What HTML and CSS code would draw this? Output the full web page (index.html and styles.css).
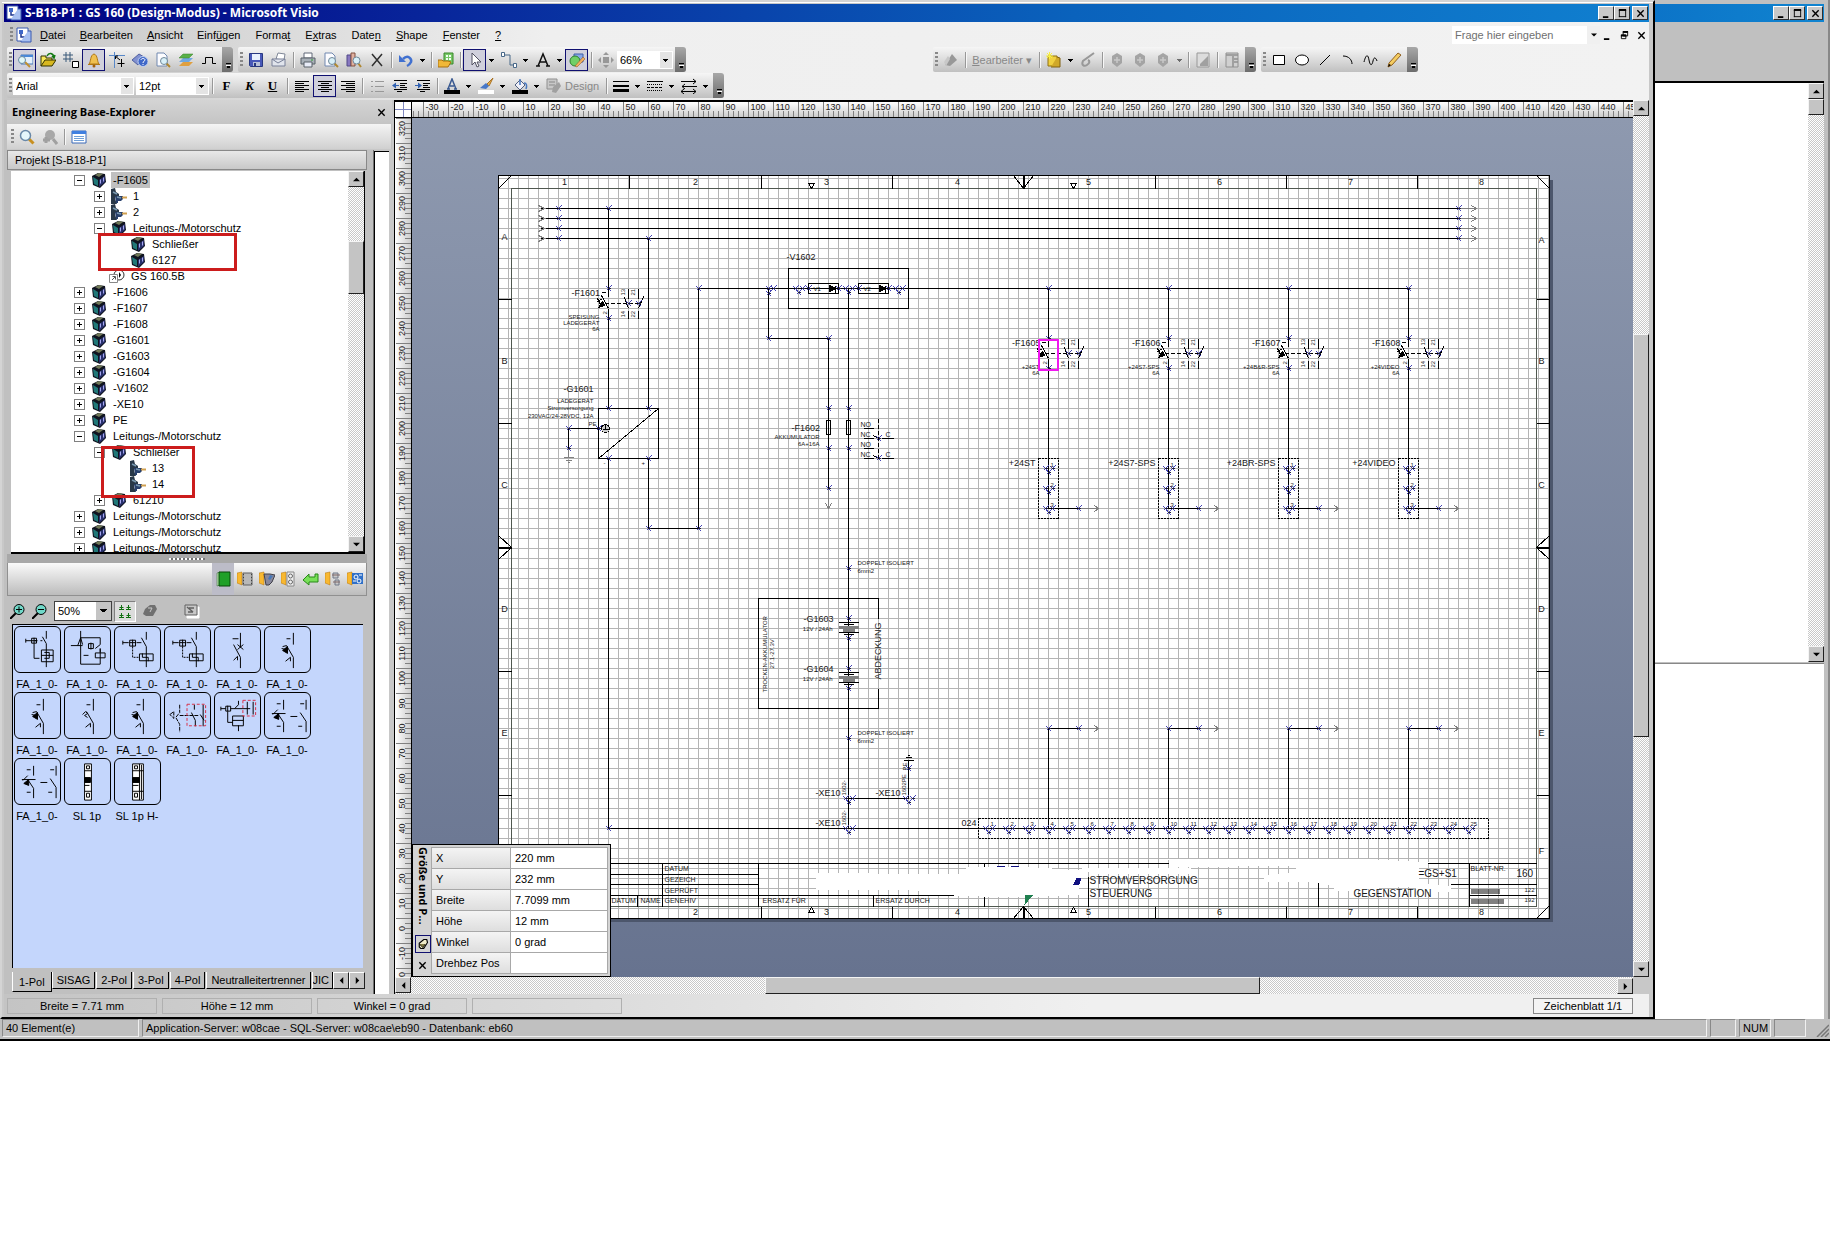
FILE: index.html
```html
<!DOCTYPE html>
<html lang="de">
<head>
<meta charset="utf-8">
<meta name="viewport" content="width=device-width, initial-scale=1">
<title>S-B18-P1 : GS 160 (Design-Modus) - Microsoft Visio</title>
<link rel="stylesheet" href="styles.css">
</head>
<body>
<svg class="sprite" aria-hidden="true">
  <symbol id="i-lens" viewBox="0 0 16 16"><path d="M9.500 9.500l5 5" stroke="#c89020" stroke-width="3"/><circle cx="6.500" cy="6.500" r="5" fill="#e4f6fc" stroke="#6888a8" stroke-width="1.500"/></symbol>
  <symbol id="i-lensgray" viewBox="0 0 16 16"><circle cx="8" cy="6" r="5" fill="#a8a8a8"/><path d="M11 10l4 5M1 11h7M4 8v6" stroke="#a0a0a0" stroke-width="3"/></symbol>
  <symbol id="i-window" viewBox="0 0 16 16"><path d="M1 2h14v12H1z" fill="#fff" stroke="#3868b8"/><path d="M1 2h14v3H1z" fill="#4080e0"/><path d="M3 7.500h10M3 9.500h10M3 11.500h10" stroke="#70a0d8"/></symbol>
  <symbol id="i-winlens" viewBox="0 0 16 16"><path d="M4 3h12v9H4z" fill="#e4f0fc" stroke="#4878b8"/><path d="M4 3h12v2H4z" fill="#4888d8"/><path d="M8 10l5 5" stroke="#c09030" stroke-width="2"/><circle cx="5" cy="8" r="3.500" fill="#e0f8f8" stroke="#6888a0"/></symbol>
  <symbol id="i-open" viewBox="0 0 16 16"><path d="M1 14V4h5v2h6v3" fill="#f8e858" stroke="#303000"/><path d="M1 14l4-6h11l-4 6z" fill="#d8b820" stroke="#303000"/><path d="M7 4c2-4 6-3 7 1M12 4l2 2 1-3" fill="none" stroke="#107810" stroke-width="1.500"/></symbol>
  <symbol id="i-grid" viewBox="0 0 16 16"><path d="M3 0v10M7 0v10M0 3h10M0 7h10" stroke="#385878"/><path d="M9.500 9.500h6v6h-6z" fill="#fff" stroke="#000"/></symbol>
  <symbol id="i-bell" viewBox="0 0 16 16"><path d="M3 12c2-2 1-9 5-10 4 1 3 8 5 10z" fill="#f0c050" stroke="#b07818"/><path d="M2 12.500h12" stroke="#b07818"/><circle cx="8" cy="14" r="1.500" fill="#a06010"/></symbol>
  <symbol id="i-guides" viewBox="0 0 16 16"><path d="M5.500 0v16M0 3.500h16" stroke="#5888c8"/><path d="M6 4l5 4M12.500 7v8M8.500 11.500h7M7 4h2M6.500 5v2" stroke="#000"/></symbol>
  <symbol id="i-help" viewBox="0 0 16 16"><path d="M0 8l7-6 5 3-6 8z" fill="#8090d0" stroke="#5060a0"/><circle cx="11" cy="9.500" r="5" fill="#4068c8" stroke="#c0d0f0"/><path d="M9 8c0-2 4-2 4 0 0 1-2 1-2 3m0 1v1" fill="none" stroke="#fff"/></symbol>
  <symbol id="i-pagelens" viewBox="0 0 16 16"><path d="M2 1h7l3 3v10H2z" fill="#fcfcff" stroke="#7088b0"/><path d="M11 11l4 4" stroke="#b08830" stroke-width="2"/><circle cx="9" cy="9" r="3.500" fill="#d8f0f8" stroke="#708898"/></symbol>
  <symbol id="i-layers" viewBox="0 0 16 16"><path d="M1 14l4-4h10l-4 4z" fill="#e0a040"/><path d="M1 10l4-4h10l-4 4z" fill="#70a8e0"/><path d="M1 6l4-4h10l-4 4z" fill="#58b048" stroke="#388028" stroke-width=".5"/></symbol>
  <symbol id="i-pulse" viewBox="0 0 16 16"><path d="M1 11.500h3.500v-6h7v6H15" fill="none" stroke="#000"/></symbol>
  <symbol id="i-save" viewBox="0 0 16 16"><path d="M1.500 1.500h13v13h-12l-1-1z" fill="#4858b8" stroke="#283880"/><path d="M4 2h8v6H4z" fill="#e8f0fc"/><path d="M5 10h7v4H5z" fill="#b8c0d8"/><path d="M6 11h2v3H6z" fill="#283880"/></symbol>
  <symbol id="i-mail" viewBox="0 0 16 16"><path d="M5 7l2-6 7 1-1 6z" fill="#fff" stroke="#808898"/><path d="M1 7h13v7H1z" fill="#e0e4ec" stroke="#788098"/><path d="M1 7l6 4 7-4" fill="none" stroke="#788098"/></symbol>
  <symbol id="i-print" viewBox="0 0 16 16"><path d="M4 1h8v5H4z" fill="#fff" stroke="#606878"/><path d="M1 6h14v6H1z" fill="#a8b0b8" stroke="#586068"/><path d="M4 10h8v5H4z" fill="#e8ecf8" stroke="#586068"/><path d="M11 8h2" stroke="#30a030"/></symbol>
  <symbol id="i-find" viewBox="0 0 16 16"><path d="M1 3h4v11H1z" fill="#8878c0" stroke="#504888"/><path d="M5 1h4v13H5z" fill="#e0b0a0" stroke="#805040"/><path d="M12 11l3 4" stroke="#b08830" stroke-width="2"/><circle cx="10.500" cy="8.500" r="3.500" fill="#d8f0f8" stroke="#708898"/></symbol>
  <symbol id="i-x" viewBox="0 0 16 16"><path d="M3 2l10 12M13 2L3 14" stroke="#303030" stroke-width="1.500"/></symbol>
  <symbol id="i-undo" viewBox="0 0 16 16"><path d="M5 7c5-5 9 0 8 3-1 2-2 3-4 4" fill="none" stroke="#4070d0" stroke-width="2.500"/><path d="M1 3v7h7z" fill="#4070d0"/></symbol>
  <symbol id="i-stencil" viewBox="0 0 16 16"><path d="M6 1h9v11H6z" fill="#78c868" stroke="#388828"/><path d="M8 3h2v2H8zM11 3h2v2h-2zM8 6h2v2H8zM11 6h2v2h-2z" fill="#f0fff0"/><path d="M0 15V8h4l1 1h5l3 1-3 5z" fill="#f0b838" stroke="#a87010"/></symbol>
  <symbol id="i-pointer" viewBox="0 0 16 16"><path d="M5 1v12l3-3 2 5 2-1-2-4h4z" fill="#fff" stroke="#505060"/></symbol>
  <symbol id="i-connector" viewBox="0 0 16 16"><path d="M4 3h5v10h3" fill="none" stroke="#486888"/><path d="M.5.500h3v4h-3zM12.500 11.500h3v4h-3z" fill="#fff" stroke="#486888"/></symbol>
  <symbol id="i-a" viewBox="0 0 16 16"><path d="M3 14L8 2l5 12M5 10h6M1 14h4M11 14h4" fill="none" stroke="#101010" stroke-width="1.500"/></symbol>
  <symbol id="i-shapes" viewBox="0 0 16 16"><path d="M5 2h9v8H5z" fill="#88a8e8" stroke="#4060a8"/><circle cx="6" cy="9" r="5" fill="#70d068" stroke="#308030"/><path d="M6 14l8-9 2 2-8 8z" fill="#f0b060" stroke="#885020" stroke-width=".5"/></symbol>
  <symbol id="i-nudge" viewBox="0 0 16 16"><path d="M5 5h6v6H5zM8 0l3 3H5zM8 16l3-3H5zM0 8l3-3v6zM16 8l-3-3v6z" fill="#989898"/></symbol>
  <symbol id="i-left" viewBox="0 0 16 16"><path d="M1 3.500h14M1 5.500h9M1 7.500h14M1 9.500h9M1 11.500h14M1 13.500h9" stroke="#000"/></symbol>
  <symbol id="i-center" viewBox="0 0 16 16"><path d="M1 3.500h14M4 5.500h8M1 7.500h14M4 9.500h8M1 11.500h14M4 13.500h8" stroke="#000"/></symbol>
  <symbol id="i-right" viewBox="0 0 16 16"><path d="M1 3.500h14M6 5.500h9M1 7.500h14M6 9.500h9M1 11.500h14M6 13.500h9" stroke="#000"/></symbol>
  <symbol id="i-list" viewBox="0 0 16 16"><path d="M6 3.500h9M6 8.500h9M6 13.500h9M2 3.500h2M2 8.500h2M2 13.500h2" stroke="#989898"/></symbol>
  <symbol id="i-outdent" viewBox="0 0 16 16"><path d="M2 2.500h13M8 5.500h7M8 7.500h5M8 9.500h7M2 11.500h13M5 13.500h5" stroke="#000"/><path d="M0 7.500l4-3v6zM4 7h3v1H4z" fill="#3060b0"/></symbol>
  <symbol id="i-indent" viewBox="0 0 16 16"><path d="M2 2.500h13M8 5.500h7M8 7.500h5M8 9.500h7M2 11.500h13M5 13.500h5" stroke="#000"/><path d="M7 7.500l-4-3v6zM0 7h3v1H0z" fill="#3060b0"/></symbol>
  <symbol id="i-fontcolor" viewBox="0 0 16 16"><path d="M4 11L8 1l4 10M6 8h4M3 11h3M10 11h3" fill="none" stroke="#385890" stroke-width="1.500"/><path d="M0 12h16v4H0z"/></symbol>
  <symbol id="i-brush" viewBox="0 0 16 16"><path d="M15 0l-6 6 2 2z" fill="#e8b050" stroke="#a87020"/><path d="M2 10l6-5 3 3-3 3z" fill="#4878c8"/><path d="M0 12h16v4H0z" fill="#fff"/></symbol>
  <symbol id="i-bucket" viewBox="0 0 16 16"><path d="M3 7l5-5 5 5-5 5z" fill="#f0f0f8" stroke="#506080"/><path d="M8 7V1M12 5c3 0 3 3 2 6" fill="none" stroke="#4878c0" stroke-width="1.500"/><path d="M0 12h16v4H0z"/></symbol>
  <symbol id="i-design" viewBox="0 0 16 16"><path d="M1 1h10v10H1z" fill="#c8c8c8" stroke="#909090"/><path d="M3 4h6M3 7h6" stroke="#888"/><path d="M7 9l6-5 2 4-5 7-4-1z" fill="#a0a0a0"/></symbol>
  <symbol id="i-weight" viewBox="0 0 16 16"><path d="M0 3.500h16" stroke="#000"/><path d="M0 8h16" stroke="#000" stroke-width="2"/><path d="M0 12.500h16" stroke="#000" stroke-width="3"/></symbol>
  <symbol id="i-dash" viewBox="0 0 16 16"><path d="M0 3.500h16" stroke="#000"/><path d="M0 6.500h16M0 12.500h16" stroke="#000" stroke-dasharray="1 1"/><path d="M0 9.500h16" stroke="#000" stroke-dasharray="3 1"/></symbol>
  <symbol id="i-arrows" viewBox="0 0 16 16"><path d="M0 3.500h15M1 8.500h15M0 13.500h15M12 1l3 2.500L12 6M4 6L1 8.500 4 11M12 11l3 2.500-3 2.500M3 11l-3 2.500L3 16" fill="none" stroke="#000"/></symbol>
  <symbol id="i-gpen" viewBox="0 0 16 16"><path d="M2 13L9 2l5 6-7 6z" fill="#989898"/><path d="M1 10l4-6 2 3-4 7z" fill="#c8c8c8"/></symbol>
  <symbol id="i-gcube" viewBox="0 0 16 16"><path d="M8 1l5 3v7l-5 4-5-4V4z" fill="#a4a4a4"/><path d="M5 8h6M8 5v6" stroke="#c8c8c8" stroke-width="1.500"/></symbol>
  <symbol id="i-glink" viewBox="0 0 16 16"><path d="M14 1L3 9c-2 4 1 6 4 4s3-4 1-5" fill="none" stroke="#989898" stroke-width="2"/></symbol>
  <symbol id="i-gdoc" viewBox="0 0 16 16"><path d="M2 1h12v14H2z" fill="#dcdcdc" stroke="#989898"/><path d="M5 12l8-8v10H5z" fill="#a0a0a0"/></symbol>
  <symbol id="i-gtable" viewBox="0 0 16 16"><path d="M2 1h12v14H2z" fill="#d0d0d0" stroke="#909090"/><path d="M2 3h12M9 4v11M10 7h4M10 10h4" stroke="#909090" stroke-width="1.500"/></symbol>
  <symbol id="i-new" viewBox="0 0 16 16"><path d="M2 4h9v10H2z" fill="#f0d040" stroke="#907010"/><path d="M11 5l3 1v9H5" fill="#d0a828" stroke="#806010"/><path d="M0 4h7M3.500 0v7M1 1l5 5M6 1L1 6" stroke="#f8f040"/></symbol>
  <symbol id="i-rect" viewBox="0 0 16 16"><path d="M2.500 3.500h11v9h-11z" fill="#fff" stroke="#000"/></symbol>
  <symbol id="i-oval" viewBox="0 0 16 16"><ellipse cx="8" cy="8" rx="6.500" ry="5" fill="#fff" stroke="#000"/></symbol>
  <symbol id="i-line" viewBox="0 0 16 16"><path d="M3 13L13 3" stroke="#000"/></symbol>
  <symbol id="i-arc" viewBox="0 0 16 16"><path d="M3 4c6 0 9 4 9 8" fill="none" stroke="#000"/></symbol>
  <symbol id="i-curve" viewBox="0 0 16 16"><path d="M1 10c2-8 4-8 5-2s3 6 4 1 3-3 4 0" fill="none" stroke="#000"/></symbol>
  <symbol id="i-pencil" viewBox="0 0 16 16"><path d="M2 15l1-4L12 1l3 2-9 10z" fill="#f4cc60" stroke="#906020"/><path d="M2 15l1-3 2 1z"/></symbol>
  <symbol id="i-app" viewBox="0 0 16 16"><path d="M1 1h11v13H1z" fill="#fff" stroke="#3858b0"/><path d="M3 3h4v4H3zM9 8h3v3H9z" fill="#4068c8"/><path d="M5 7v3h4" fill="none" stroke="#203890" stroke-width="1.500"/><path d="M12 4h3v11H5v-1" fill="#a8c0f0" stroke="#3858b0"/></symbol>
  <symbol id="i-cube" viewBox="0 0 16 16"><path d="M1 4l6-3 7 1 1 8-6 6-7-3z" fill="#101420"/><path d="M2 5l5 3v6l-4-2z" fill="#207878"/><path d="M8 8l6-4v6l-6 5z" fill="#28306c"/><path d="M9 8l1-1v4l-1 1zM12 6l1-1v4l-1 1z" fill="#a8a8f0"/><path d="M4 3l4-2 4 1-4 3z" fill="#707858"/></symbol>
  <symbol id="i-pin" viewBox="0 0 16 16"><path d="M0 1l4-1 1 4 3 2v3H4v2l2 5H0z" fill="#283848"/><path d="M4 8h8v3l-2 2H7v2H5z" fill="#28406c"/><path d="M2 4l4 2M6 9l4 1" stroke="#7898b0" stroke-width="1.500"/><path d="M11 9.500h5" stroke="#d0a050" stroke-width="2"/></symbol>
  <symbol id="i-ref" viewBox="0 0 16 16"><circle cx="10" cy="7" r="5" fill="#fff" stroke="#303030"/><path d="M10 4l2 3-2 3z"/><path d="M.5 6.500h8v8h-8z" fill="#fff" stroke="#888"/><path d="M3 12l3-3M3.500 8.500h3v3" fill="none" stroke="#555"/></symbol>
  <symbol id="i-book" viewBox="0 0 16 16"><path d="M2 2l3-1v13l-3 1z" fill="#b8e8b0" stroke="#305830" stroke-width=".5"/><path d="M4 1h11v14H4z" fill="#20a028" stroke="#084808"/></symbol>
  <symbol id="i-folder" viewBox="0 0 16 16"><path d="M0 2l5-1v13l-5-2z" fill="#f8b830" stroke="#b07010" stroke-width=".5"/></symbol>
  <symbol id="i-f1" viewBox="0 0 16 16"><use href="#i-folder"/><path d="M6 2h9v12H6z" fill="#b8b8b8" stroke="#606060"/><path d="M6.500 3v11M14.500 3v11" stroke="#404040" stroke-dasharray="1 2"/></symbol>
  <symbol id="i-f2" viewBox="0 0 16 16"><use href="#i-folder"/><path d="M5 3h6l5 1-3 7-3 3H7z" fill="#88889c" stroke="#404048"/><path d="M11 4l3 1-3 4-2-1z" fill="#4878b8"/></symbol>
  <symbol id="i-f3" viewBox="0 0 16 16"><use href="#i-folder"/><path d="M6 1h7v14H6z" fill="#f0f0f0" stroke="#888"/><circle cx="9.500" cy="5" r="2" fill="none" stroke="#666"/><circle cx="9.500" cy="11" r="2" fill="none" stroke="#666"/></symbol>
  <symbol id="i-f4" viewBox="0 0 16 16"><use href="#i-folder"/><path d="M8 2h5v5H8zM10 9h4v5h-4z" fill="#c8c8c8" stroke="#707888"/><path d="M7 4h8M8 11h7" stroke="#806868"/></symbol>
  <symbol id="i-f5" viewBox="0 0 16 16"><use href="#i-folder"/><path d="M5 2h11v11H5z" fill="#3070c8"/><circle cx="9" cy="6" r="2" fill="none" stroke="#fff"/><circle cx="12" cy="10" r="2" fill="none" stroke="#fff"/><path d="M12 4h3M6 10h3" stroke="#fff"/></symbol>
  <symbol id="i-back" viewBox="0 0 16 16"><path d="M0 9l6-6v3h6V3h3v8H6v3z" fill="#78e058" stroke="#288818"/></symbol>
  <symbol id="i-zoomin" viewBox="0 0 16 16"><path d="M6 10l-6 6" stroke="#000" stroke-width="2"/><circle cx="9" cy="6.500" r="5" fill="#70d8c8" stroke="#000"/><path d="M6 6.500h6M9 3.500v6" stroke="#000"/></symbol>
  <symbol id="i-zoomout" viewBox="0 0 16 16"><path d="M6 10l-6 6" stroke="#000" stroke-width="2"/><circle cx="9" cy="6.500" r="5" fill="#70d8c8" stroke="#000"/><path d="M6 6.500h6" stroke="#000"/></symbol>
  <symbol id="i-tiles" viewBox="0 0 16 16"><path d="M2 6.500h5M9 6.500h5M2 14.500h5M9 14.500h5M4.500 2v4M11.500 2v4M4.500 10v4M11.500 10v4M2.500 4.500h4M9.500 4.500h4M2.500 12.500h4M9.500 12.500h4" stroke="#107010"/></symbol>
  <symbol id="i-tack" viewBox="0 0 16 16"><path d="M3 6l5-4h5l2 4-4 7H4l-3-2z" fill="#707070"/><path d="M6 5h4l-2 4" fill="none" stroke="#c8c8c8"/></symbol>
  <symbol id="i-tack2" viewBox="0 0 16 16"><path d="M3 7l6-5h4l1 4-5 8H5l-2-2z" fill="#f0ecc8" stroke="#000" stroke-width="1.500"/><path d="M3 8l5 5 3-5" fill="#807840" stroke="#000"/></symbol>
  <symbol id="i-pages" viewBox="0 0 16 16"><path d="M3 4h12v11H3z" fill="#fff" stroke="#fff"/><path d="M1 2h12v10H1z" fill="#c8c8c8" stroke="#606060"/><path d="M3 4l6 5M5 5h5M4 9h5" stroke="#606060" stroke-width="1.500"/></symbol>
  <symbol id="a-up" viewBox="0 0 8 8"><path d="M4 2l4 4H0z"/></symbol>
  <symbol id="a-down" viewBox="0 0 8 8"><path d="M4 6l4-4H0z"/></symbol>
  <symbol id="a-left" viewBox="0 0 8 8"><path d="M2 4l4-4v8z"/></symbol>
  <symbol id="a-right" viewBox="0 0 8 8"><path d="M6 4L2 0v8z"/></symbol>
  <symbol id="w-min" viewBox="0 0 10 10"><path d="M1 8h6v2H1z"/></symbol>
  <symbol id="w-max" viewBox="0 0 10 10"><path d="M1 1.500h8M1.500 1v8M8.500 1v8M1 8.500h8" stroke="#000"/><path d="M1 0h8v2H1z"/></symbol>
  <symbol id="w-res" viewBox="0 0 10 10"><path d="M3.500 1.500h5v4h-5zM1.500 4.500h5v4h-5z" fill="none" stroke="#000"/><path d="M3 0h6v2H3zM1 4h6v2H1z"/></symbol>
  <symbol id="w-x" viewBox="0 0 10 10"><path d="M1.500 1.500l7 7M8.500 1.500l-7 7" stroke="#000" stroke-width="1.500"/></symbol>
  <symbol id="s-coil" viewBox="0 0 46 46"><path d="M11 14h6m3 0h3m3 0h2M11 12v4M17 11.500h5v5h-5zM17 14h5M19.500 11v6M28 10l4 7v24M32 4v8M27 23.500h12v12H27zM19.500 17v15H25M27 29h12M30 26h5v6h-5"/></symbol>
  <symbol id="s-loop" viewBox="0 0 46 46"><path d="M16 4v34M16 11h20v7l-5 4M36 22v16H16M13 19l3-8 2 7M6 19h12M24 17h5v5h-5zM26.500 16v7M31 26.500h10v5H31zM36 22v4M19 29h5"/></symbol>
  <symbol id="s-coil2" viewBox="0 0 46 46"><path d="M8 16h6M8 14v4M15 13.500h6v6h-6zM15 16h6M18 13v7M22 16h5M27 11l5 9v21M32 5v8M25 27.500h14v7H25z"/><path d="M18 20v11h7" stroke-dasharray="2 1"/><path d="M28 27v4h6v4"/></symbol>
  <symbol id="s-sw" viewBox="0 0 46 46"><path d="M26 6v15M23 18l6 5M29 18l-6 5M19 18l7 13v11M18 12h6M19 34l4-4v4"/></symbol>
  <symbol id="s-br" viewBox="0 0 46 46"><path d="M29 6v12M22 19l7 12v11M22 12h4M21 35l5-4v4M18 20l4-1M17 22l5 1"/><path d="M18 24l5-4v7z" fill="currentColor"/></symbol>
  <symbol id="s-br2" viewBox="0 0 46 46"><path d="M29 6v12M22 19l7 12v11M22 12h4M21 35l5-4v4M18 22l3-3 2 2-3 2 3 2"/></symbol>
  <symbol id="s-red" viewBox="0 0 46 46"><path d="M15 12v8l-4 5 4 7v8M5 22l4-3v7zM15 23h20" stroke-dasharray="4 1"/><path d="M30 12v5M27 20l4 8v6M39 12v22M36 22l4 6"/><path d="M22.500 11.500h19v22h-19z" stroke="#d83048" stroke-dasharray="3 2"/></symbol>
  <symbol id="s-red2" viewBox="0 0 46 46"><path d="M6 16h5M6 14v4M11 13.500h5v5h-5zM13 13v6M13 19v11h5M18 23.500h11v10H18zM18 28h11M24 8v4l-4 4M24 33v6M16 16h20"/><path d="M28.500 7.500h13v16h-13z" stroke="#d83048" stroke-dasharray="3 2"/><path d="M33 9v13M39 9v13"/></symbol>
  <symbol id="s-two" viewBox="0 0 46 46"><path d="M19 7v10M13 21l6 9v10M7 21h14M26 24h7M42 7v10M36 20l6 9v11M12 11h4M36 11h4M12 34h4M34 34h4M8 22l5-5"/><path d="M9 25l5-4v6z" fill="currentColor"/></symbol>
  <symbol id="s-sl" viewBox="0 0 46 46"><path d="M20 5h7v37h-7z" fill="#fff"/><path d="M20 12h7M20 33h7M22 7h3v3h-3zM22 35h3v4h-3zM20 27h5"/><path d="M20 19h6v5h-6z" fill="currentColor"/></symbol>
  <symbol id="s-slh" viewBox="0 0 46 46"><path d="M18 5h11v37H18zM25 5v37" fill="#fff"/><path d="M18 12h11M18 33h11M20 7h3v3h-3zM20 35h3v4h-3zM27 6v35M18 27h6"/><path d="M18 19h7v5h-7z" fill="currentColor"/></symbol>
</svg>

<div class="host">
 <div class="windows">
 <main class="visio">
  <header class="titlebar"><svg class="ico"><use href="#i-app"/></svg><h1>S-B18-P1 : GS 160 (Design-Modus) - Microsoft Visio</h1>
   <div class="winbtns"><button aria-label="Minimieren"><svg><use href="#w-min"/></svg></button><button aria-label="Maximieren"><svg><use href="#w-max"/></svg></button><button class="close" aria-label="Schließen"><svg><use href="#w-x"/></svg></button></div>
  </header>
  <div class="chrome">
   <nav class="menubar"><span class="grip"></span><svg class="ico"><use href="#i-app"/></svg>
    <button><u>D</u>atei</button><button><u>B</u>earbeiten</button><button><u>A</u>nsicht</button><button>Einf<u>ü</u>gen</button><button>Forma<u>t</u></button><button>E<u>x</u>tras</button><button>Date<u>n</u></button><button><u>S</u>hape</button><button><u>F</u>enster</button><button><u>?</u></button>
    <div class="ask"><input aria-label="Frage" placeholder="Frage hier eingeben"><button aria-label="Liste"><svg><use href="#a-down"/></svg></button></div>
    <div class="docbtns"><button aria-label="Dokument minimieren"><svg><use href="#w-min"/></svg></button><button aria-label="Wiederherstellen"><svg><use href="#w-res"/></svg></button><button aria-label="Dokument schließen"><svg><use href="#w-x"/></svg></button></div>
   </nav>
   <div class="bars">
    <div class="band"><span class="grip"></span>
     <button class="on" aria-label="Explorer"><svg><use href="#i-winlens"/></svg></button><button aria-label="Öffnen"><svg><use href="#i-open"/></svg></button><button aria-label="Raster"><svg><use href="#i-grid"/></svg></button><button class="on" aria-label="Meldungen"><svg><use href="#i-bell"/></svg></button><button aria-label="Führungslinien"><svg><use href="#i-guides"/></svg></button><button aria-label="Hilfe"><svg><use href="#i-help"/></svg></button><button aria-label="Blattsuche"><svg><use href="#i-pagelens"/></svg></button><button aria-label="Ebenen"><svg><use href="#i-layers"/></svg></button><button aria-label="Verbindung"><svg><use href="#i-pulse"/></svg></button>
     <button class="end" aria-label="Optionen"></button></div>
    <div class="band"><span class="grip"></span>
     <button aria-label="Speichern"><svg><use href="#i-save"/></svg></button><button aria-label="Senden"><svg><use href="#i-mail"/></svg></button><i></i><button aria-label="Drucken"><svg><use href="#i-print"/></svg></button><button aria-label="Seitenansicht"><svg><use href="#i-pagelens"/></svg></button><button aria-label="Recherchieren"><svg><use href="#i-find"/></svg></button><button aria-label="Löschen"><svg><use href="#i-x"/></svg></button><i></i><button aria-label="Rückgängig"><svg><use href="#i-undo"/></svg></button><button class="dd" aria-label="Mehr"></button><i></i><button aria-label="Schablonen"><svg><use href="#i-stencil"/></svg></button><i></i><button class="on" aria-label="Zeiger"><svg><use href="#i-pointer"/></svg></button><button class="dd" aria-label="Mehr"></button><button aria-label="Verbinder"><svg><use href="#i-connector"/></svg></button><button class="dd" aria-label="Mehr"></button><button aria-label="Text"><svg><use href="#i-a"/></svg></button><button class="dd" aria-label="Mehr"></button><button class="on" aria-label="Zeichnen"><svg><use href="#i-shapes"/></svg></button><i></i><button aria-label="Verschieben"><svg><use href="#i-nudge"/></svg></button>
     <select class="zoom" aria-label="Zoom"><option>66%</option></select>
     <button class="end" aria-label="Optionen"></button></div>
    <div class="band design"><span class="grip"></span>
     <button aria-label="Überarbeiten"><svg><use href="#i-gpen"/></svg></button><i></i><button class="word"><span><u>B</u>earbeiter ▾</span></button><i></i><button aria-label="Neu"><svg><use href="#i-new"/></svg></button><button class="dd" aria-label="Mehr"></button><button aria-label="Stift"><svg><use href="#i-glink"/></svg></button><i></i><button aria-label="Zurück"><svg><use href="#i-gcube"/></svg></button><button aria-label="Weiter"><svg><use href="#i-gcube"/></svg></button><button aria-label="Entfernen"><svg><use href="#i-gcube"/></svg></button><button class="dd off" aria-label="Mehr"></button><i></i><button aria-label="Markup"><svg><use href="#i-gdoc"/></svg></button><i></i><button aria-label="Bereich"><svg><use href="#i-gtable"/></svg></button>
     <button class="end" aria-label="Optionen"></button></div>
    <div class="band"><span class="grip"></span>
     <button aria-label="Rechteck"><svg><use href="#i-rect"/></svg></button><button aria-label="Ellipse"><svg><use href="#i-oval"/></svg></button><button aria-label="Linie"><svg><use href="#i-line"/></svg></button><button aria-label="Bogen"><svg><use href="#i-arc"/></svg></button><button aria-label="Kurve"><svg><use href="#i-curve"/></svg></button><button aria-label="Bleistift"><svg><use href="#i-pencil"/></svg></button>
     <button class="end" aria-label="Optionen"></button></div>
   </div>
   <div class="bars">
    <div class="band"><span class="grip"></span>
     <select class="face" aria-label="Schriftart"><option>Arial</option></select><select class="size" aria-label="Schriftgrad"><option>12pt</option></select><i></i>
     <button class="fmt"><b>F</b></button><button class="fmt"><b><em>K</em></b></button><button class="fmt"><b><u>U</u></b></button><i></i>
     <button aria-label="Links"><svg><use href="#i-left"/></svg></button><button class="on" aria-label="Zentriert"><svg><use href="#i-center"/></svg></button><button aria-label="Rechts"><svg><use href="#i-right"/></svg></button><i></i><button aria-label="Aufzählung"><svg><use href="#i-list"/></svg></button><button aria-label="Einzug kleiner"><svg><use href="#i-outdent"/></svg></button><button aria-label="Einzug größer"><svg><use href="#i-indent"/></svg></button><i></i><button aria-label="Textfarbe"><svg><use href="#i-fontcolor"/></svg></button><button class="dd" aria-label="Mehr"></button><button aria-label="Linienfarbe"><svg><use href="#i-brush"/></svg></button><button class="dd" aria-label="Mehr"></button><button aria-label="Füllfarbe"><svg><use href="#i-bucket"/></svg></button><button class="dd" aria-label="Mehr"></button><button class="word"><svg><use href="#i-design"/></svg>Design</button><i></i><button aria-label="Linienstärke"><svg><use href="#i-weight"/></svg></button><button class="dd" aria-label="Mehr"></button><button aria-label="Linienmuster"><svg><use href="#i-dash"/></svg></button><button class="dd" aria-label="Mehr"></button><button aria-label="Linienenden"><svg><use href="#i-arrows"/></svg></button><button class="dd" aria-label="Mehr"></button>
     <button class="end" aria-label="Optionen"></button></div>
   </div>
  </div>

  <div class="work">
   <aside class="explorer">
    <div class="exhead"><h2>Engineering Base-Explorer</h2><button aria-label="Schließen"><svg><use href="#w-x"/></svg></button></div>
    <div class="extools"><span class="grip"></span><button aria-label="Suchen"><svg><use href="#i-lens"/></svg></button><button aria-label="Ersetzen"><svg><use href="#i-lensgray"/></svg></button><i></i><button aria-label="Eigenschaften"><svg><use href="#i-window"/></svg></button></div>
    <div class="excols">
     <div class="exmain">
      <h3>Projekt [S-B18-P1]</h3>
      <div class="treebox">
       <ul class="tree">
        <li class="l0 minus"><svg><use href="#i-cube"/></svg><span class="sel">-F1605</span></li>
        <li class="l1 plus"><svg><use href="#i-pin"/></svg><span>1</span></li>
        <li class="l1 plus"><svg><use href="#i-pin"/></svg><span>2</span></li>
        <li class="l1 minus"><svg><use href="#i-cube"/></svg><span>Leitungs-/Motorschutz</span></li>
        <li class="l2"><svg><use href="#i-cube"/></svg><span>Schließer</span></li>
        <li class="l2"><svg><use href="#i-cube"/></svg><span>6127</span></li>
        <li class="l1"><svg><use href="#i-ref"/></svg><span>GS 160.5B</span></li>
        <li class="l0 plus"><svg><use href="#i-cube"/></svg><span>-F1606</span></li>
        <li class="l0 plus"><svg><use href="#i-cube"/></svg><span>-F1607</span></li>
        <li class="l0 plus"><svg><use href="#i-cube"/></svg><span>-F1608</span></li>
        <li class="l0 plus"><svg><use href="#i-cube"/></svg><span>-G1601</span></li>
        <li class="l0 plus"><svg><use href="#i-cube"/></svg><span>-G1603</span></li>
        <li class="l0 plus"><svg><use href="#i-cube"/></svg><span>-G1604</span></li>
        <li class="l0 plus"><svg><use href="#i-cube"/></svg><span>-V1602</span></li>
        <li class="l0 plus"><svg><use href="#i-cube"/></svg><span>-XE10</span></li>
        <li class="l0 plus"><svg><use href="#i-cube"/></svg><span>PE</span></li>
        <li class="l0 minus"><svg><use href="#i-cube"/></svg><span>Leitungs-/Motorschutz</span></li>
        <li class="l1 minus"><svg><use href="#i-cube"/></svg><span>Schließer</span></li>
        <li class="l2"><svg><use href="#i-pin"/></svg><span>13</span></li>
        <li class="l2"><svg><use href="#i-pin"/></svg><span>14</span></li>
        <li class="l1 plus"><svg><use href="#i-cube"/></svg><span>61210</span></li>
        <li class="l0 plus"><svg><use href="#i-cube"/></svg><span>Leitungs-/Motorschutz</span></li>
        <li class="l0 plus"><svg><use href="#i-cube"/></svg><span>Leitungs-/Motorschutz</span></li>
        <li class="l0 plus"><svg><use href="#i-cube"/></svg><span>Leitungs-/Motorschutz</span></li>
       </ul>
       <div class="callout first"></div><div class="callout second"></div>
       <div class="vscroll"><button aria-label="Nach oben"><svg><use href="#a-up"/></svg></button><span class="thumb treethumb"></span><button aria-label="Nach unten"><svg><use href="#a-down"/></svg></button></div>
      </div>
      <div class="splitter"><span></span></div>
      <div class="foldertools"><button class="on" aria-label="Bibliothek"><svg><use href="#i-book"/></svg></button><button aria-label="Geräte"><svg><use href="#i-f1"/></svg></button><button aria-label="Baugruppen"><svg><use href="#i-f2"/></svg></button><button aria-label="Blätter"><svg><use href="#i-f3"/></svg></button><button aria-label="Zurück"><svg><use href="#i-back"/></svg></button><button aria-label="Typen"><svg><use href="#i-f4"/></svg></button><button aria-label="Symbole"><svg><use href="#i-f5"/></svg></button></div>
      <div class="zoomtools"><button aria-label="Vergrößern"><svg><use href="#i-zoomin"/></svg></button><button aria-label="Verkleinern"><svg><use href="#i-zoomout"/></svg></button><select aria-label="Schablonenzoom"><option>50%</option></select><button class="on" aria-label="Kacheln"><svg><use href="#i-tiles"/></svg></button><button aria-label="Fixieren"><svg><use href="#i-tack"/></svg></button><button class="pages" aria-label="Seiten"><svg><use href="#i-pages"/></svg></button></div>
      <div class="shapes">
       <figure><svg><use href="#s-coil"/></svg><figcaption>FA_1_0-</figcaption></figure><figure><svg><use href="#s-loop"/></svg><figcaption>FA_1_0-</figcaption></figure><figure><svg><use href="#s-coil2"/></svg><figcaption>FA_1_0-</figcaption></figure><figure><svg><use href="#s-coil2"/></svg><figcaption>FA_1_0-</figcaption></figure><figure><svg><use href="#s-sw"/></svg><figcaption>FA_1_0-</figcaption></figure><figure><svg><use href="#s-br"/></svg><figcaption>FA_1_0-</figcaption></figure>
       <figure><svg><use href="#s-br"/></svg><figcaption>FA_1_0-</figcaption></figure><figure><svg><use href="#s-br2"/></svg><figcaption>FA_1_0-</figcaption></figure><figure><svg><use href="#s-br"/></svg><figcaption>FA_1_0-</figcaption></figure><figure><svg><use href="#s-red"/></svg><figcaption>FA_1_0-</figcaption></figure><figure><svg><use href="#s-red2"/></svg><figcaption>FA_1_0-</figcaption></figure><figure><svg><use href="#s-two"/></svg><figcaption>FA_1_0-</figcaption></figure>
       <figure><svg><use href="#s-two"/></svg><figcaption>FA_1_0-</figcaption></figure><figure><svg><use href="#s-sl"/></svg><figcaption>SL 1p</figcaption></figure><figure><svg><use href="#s-slh"/></svg><figcaption>SL 1p H-</figcaption></figure>
      </div>
      <div class="tabs"><button class="cur">1-Pol</button><button>SISAG</button><button>2-Pol</button><button>3-Pol</button><button>4-Pol</button><button>Neutralleitertrenner</button><button class="cut">JIC</button><button class="arr" aria-label="Links"><svg><use href="#a-left"/></svg></button><button class="arr" aria-label="Rechts"><svg><use href="#a-right"/></svg></button></div>
     </div>
     <div class="exblank"></div>
    </div>
   </aside>

   <section class="editor">
    <div class="corner"></div>
    <svg class="hruler"><g id="hticks" transform="translate(-411.500,-101.500)"></g></svg>
    <svg class="vruler"><g id="vticks" transform="translate(-395.500,-117.500)"></g></svg>
    <div class="canvas">
     <svg class="drawing" role="img" aria-label="Stromlaufplan GS 160">
      <defs>
       <pattern id="grid" x="497.500" y="177.500" width="10" height="10" patternUnits="userSpaceOnUse"><path d="M0 0h10v1H0zM0 1h1v9H0z" fill="#b4b4b4" stroke="none"/></pattern>
       <pattern id="hatch" width="2" height="2" patternUnits="userSpaceOnUse"><path d="M0 0h1v1H0zM1 1h1v1H1z"/></pattern>
       <g id="mark"><path d="M-2-2L3 3M-2 2L3-3" stroke="#4444b4"/><path d="M-1 0h3" stroke="#223"/></g>
       <g id="multi"><use href="#mark" x="-3"/><use href="#mark" x="4"/><use href="#mark" y="4"/></g>
       <g id="breaker">
        <path d="M0 0v8M0 20v10M0 20l-7-13M20 0v10M20 22v8M20 20l-4-11M30 0v10M30 22v8M30 20l5-12"/><path d="M-4 15h36" stroke-dasharray="4 2"/>
        <path d="M-11 13l5-3M-11 10l3 6M-10 19l4-6 2 4z" fill="#000"/>
        <use href="#mark"/><use href="#mark" y="30"/><use href="#mark" x="20" y="15"/><use href="#mark" x="30" y="15"/>
        <g class="t6"><text transform="translate(16,7) rotate(-90)">13</text><text transform="translate(26,7) rotate(-90)">21</text><text transform="translate(16,29) rotate(-90)">14</text><text transform="translate(26,29) rotate(-90)">22</text><text transform="translate(-2,26) rotate(-90)">2</text></g>
        <path d="M-7 4h4"/>
       </g>
       <g id="battery"><path d="M-10 4h20M-5 6h10M-10 14h20M-5 16h10"/><path class="soft thick" d="M-10 9h20M-6 12h12"/><use href="#mark"/><use href="#mark" y="20"/></g>
       <g id="fuse"><path d="M-2 12h4v14h-4z" fill="none"/><use href="#mark"/><use href="#mark" y="40"/></g>
       <g id="contact"><path d="M-15 0h10M-15 10h10M3 10h12M-5 7l5 3"/><use href="#mark" y="10"/><g class="t7"><text x="-18" y="-2">NO</text><text x="-18" y="8">NC</text><text x="7" y="8">C</text></g></g>
      </defs>
      <g transform="translate(-411.500,-117.500)" class="ink">
       <path d="M502 179h1050v742H502z" class="shadow"/>
       <path d="M498 175h1051v743H498z" fill="#fff" stroke="none"/>
       <path d="M498 175h1051v743H498z" fill="url(#grid)"/>
       <path d="M511 188h1025v718H511z" class="frame"/>
       <path d="M498 188l13-13M1536 175l13 13M1536 918l13-13M1013 175l10 13 10-13M1013 918l10-12 10 12M498 535l13 12-13 12M1549 535l-13 12 13 12M808 183h6l-3 5zM1070 183h6l-3 5zM808 912h6l-3-5zM1070 912h6l-3-5z" fill="none"/>
       <path d="M629 175v13M761 175v13M892 175v13M1155 175v13M1286 175v13M1417 175v13M761 906v12M892 906v12M1155 906v12M1286 906v12M1417 906v12M498 299h13M498 423h13M498 671h13M498 795h13M1536 299h13M1536 423h13M1536 671h13M1536 795h13"/>
       <path d="M1023 175v13M1023 906v12M498 547h13M1536 547h13" stroke-width="2"/>
       <g class="t9 mid" id="zones"></g>

       <path d="M540 208H1458M540 218H1458M540 228H1458M540 238H1458M608 208v80M608 318v90M648 238v170M598 408h60v50h-60zM598 458l60-50M598 428h-30v20M608 458v370H978M648 458v70h50V288H1408M768 288v50h60v150M848 288v540M788 268h120v40H788z" fill="none"/>
       <path d="M878 618v-20H758v110h120v-20" fill="none"/>
       <path class="soft" d="M538 205l6 3-6 3M538 215l6 3-6 3M538 225l6 3-6 3M538 235l6 3-6 3M1458 208h18m-5-3l5 3-5 3M1458 218h18m-5-3l5 3-5 3M1458 228h18m-5-3l5 3-5 3M1458 238h18m-5-3l5 3-5 3M568 448v9M563 457h10M565 460h6M567 462h2M828 488v20m-3-5l3 5 3-5"/>
       <circle cx="605" cy="428" r="4" fill="#ccc"/><path d="M605 424v5M602 429h6"/>
       <path d="M808 283h30v10h-30zM858 283h30v10h-30z" fill="none"/><path d="M829 285l6 3-6 3zM879 285l6 3-6 3zM835 285v7M885 285v7" fill="#000"/>
       <use href="#multi" x="798" y="288"/><use href="#multi" x="848" y="288"/><use href="#multi" x="898" y="288"/>
       <use href="#breaker" x="608" y="288"/>
       <use href="#fuse" x="828" y="408"/><use href="#fuse" x="848" y="408"/>
       <use href="#contact" x="878" y="428"/><use href="#contact" x="878" y="448"/><path d="M878 418v40" stroke-dasharray="4 2"/>
       <use href="#battery" x="848" y="618"/><use href="#battery" x="848" y="668"/>
       <path d="M848 798h60v-38M903 760h10M905 757h6M907 755h2" fill="none"/>
       <use href="#multi" x="848" y="798"/><use href="#multi" x="908" y="798"/><use href="#multi" x="848" y="828"/>
       <g id="feeds"></g>
       <path d="M1038 339h19v30h-19z" fill="none" stroke="#f018f0" stroke-width="2"/>
       <path d="M978 828h490"/><path d="M978 818h510v20H978z" fill="none" stroke-dasharray="2 1"/>
       <g id="strip"></g><g id="marks"></g>

       <g class="t9"><text x="571" y="295">-F1601</text><text x="786" y="259">-V1602</text><text x="563" y="391">-G1601</text><text x="791" y="430">-F1602</text><text x="803" y="621">-G1603</text><text x="803" y="671">-G1604</text><text x="815" y="795">-XE10</text><text x="875" y="795">-XE10</text><text x="815" y="825">-XE10</text><text x="961" y="825">024</text><text transform="translate(880,679) rotate(-90)">ABDECKUNG</text></g>
       <g class="t6 end"><text x="599" y="318">SPEISUNG</text><text x="599" y="324">LADEGERÄT</text><text x="599" y="330">6A</text><text x="593" y="402">LADEGERÄT</text><text x="593" y="409">Stromversorgung</text><text x="593" y="417">230VAC/24-28VDC, 12A</text><text x="596" y="425">PE</text><text x="819" y="438">AKKUMULATOR</text><text x="819" y="445">6A+16A</text><text x="832" y="630">12V / 24Ah</text><text x="832" y="680">12V / 24Ah</text></g>
       <g class="t6"><text x="857" y="564">DOPPELT ISOLIERT</text><text x="857" y="572">6mm2</text><text x="857" y="734">DOPPELT ISOLIERT</text><text x="857" y="742">6mm2</text><text transform="translate(766,692) rotate(-90)">TROCKEN-AKKUMULATOR</text><text transform="translate(773,668) rotate(-90)">27.1-27.3V</text><text transform="translate(845,795) rotate(-90)">1602-</text><text transform="translate(845,825) rotate(-90)">1602-</text><text transform="translate(905,795) rotate(-90)">1602PE</text><text transform="translate(906,770) rotate(-90)">PE</text><text x="813" y="290">V1</text><text x="863" y="290">V2</text><text x="603" y="464">-</text><text x="641" y="464">+</text></g>

       <path d="M511 863H1168M1427 863h109M511 874h247M511 884h247M511 895h461M758 863v43M662 863v43M610 863v43M637 895v11M873 895v11M984 863v43M1088 876v30M1318 866v40M1469 863v43M1450 884h86M1469 895h67"/>
       <path class="blot" d="M815 872l110 2 40-1 1-7h55l60 4v6h-3v18l-50 3-50-1-50-2-14-5H815z"/>
       <path class="blot" d="M1167 858h187l74 4-10 5v16l32 3v5l-20 1-22-6-75 5v-5l-20-4-50-1v-6l32-3v-7l-120 2zM1080 867h110v6h-100z"/>
       <path d="M1024 904l1-10h8l-5 6z" fill="#208050" stroke="none"/><path d="M1073 884l3-7h5l-2 7z" fill="#101080" stroke="none"/><path d="M996 866h8M1010 866h8" stroke="#101080"/>
       <path d="M1470 888h29v5h-29zM1470 898h33v5h-33z" fill="url(#hatch)" stroke="none"/>
       <g class="t10"><text x="1089" y="883">STROMVERSORGUNG</text><text x="1089" y="896">STEUERUNG</text><text x="1353" y="896">GEGENSTATION</text><text x="1418" y="876">=GS+S1</text><text x="1516" y="876">160</text></g>
       <g class="t7"><text x="664" y="870">DATUM</text><text x="664" y="881">GEZEICH</text><text x="664" y="892">GEPRÜFT</text><text x="664" y="902">GENEHIV</text><text x="611" y="902">DATUM</text><text x="640" y="902">NAME</text><text x="762" y="902">ERSATZ FÜR</text><text x="875" y="902">ERSATZ DURCH</text><text x="1470" y="870">BLATT-NR.</text></g>
       <g class="t6 end"><text x="1534" y="891">122</text><text x="1534" y="901">192</text></g>
      </g>
     </svg>
     <form class="sizepos">
      <div class="spside"><h2>Größe und P...</h2><button type="button" class="pin" aria-label="Fixieren"><svg><use href="#i-tack2"/></svg></button><button type="button" aria-label="Schließen"><svg><use href="#w-x"/></svg></button></div>
      <div class="fields">
       <label for="fx">X</label><input id="fx" value="220 mm"><label for="fy">Y</label><input id="fy" value="232 mm"><label for="fb">Breite</label><input id="fb" value="7.7099 mm"><label for="fh">Höhe</label><input id="fh" value="12 mm"><label for="fw">Winkel</label><input id="fw" value="0 grad"><label for="fd">Drehbez Pos</label><input id="fd" value="">
      </div>
     </form>
    </div>
    <div class="vscroll main"><button aria-label="Nach oben"><svg><use href="#a-up"/></svg></button><span class="thumb"></span><button aria-label="Nach unten"><svg><use href="#a-down"/></svg></button></div>
    <div class="hscroll"><button aria-label="Nach links"><svg><use href="#a-left"/></svg></button><span class="thumb"></span><button aria-label="Nach rechts"><svg><use href="#a-right"/></svg></button></div>
   </section>
  </div>
  <footer class="vstatus"><span>Breite = 7.71 mm</span><span>Höhe = 12 mm</span><span>Winkel = 0 grad</span><span></span><span class="sheetno">Zeichenblatt 1/1</span></footer>
 </main>

 <aside class="behind">
  <div class="titlebar"><div class="winbtns"><button aria-label="Minimieren"><svg><use href="#w-min"/></svg></button><button aria-label="Maximieren"><svg><use href="#w-max"/></svg></button><button class="close" aria-label="Schließen"><svg><use href="#w-x"/></svg></button></div></div>
  <div class="pane"><div class="vscroll"><button aria-label="Nach oben"><svg><use href="#a-up"/></svg></button><span class="thumb"></span><button aria-label="Nach unten"><svg><use href="#a-down"/></svg></button></div></div>
  <div class="pane2"></div>
 </aside>
 </div>
 <footer class="hoststatus"><span class="count">40 Element(e)</span><span class="server">Application-Server: w08cae - SQL-Server: w08cae\eb90 - Datenbank: eb60</span><span class="key"></span><span class="key">NUM</span><span class="key"></span><svg class="sizegrip" viewBox="0 0 14 14"><path d="M2 14L14 2M6 14l8-8M10 14l4-4" stroke="#777" stroke-width="1.500"/></svg></footer>
</div>
<script src="script.js"></script>
</body>
</html>
```
FILE: styles.css
```css
* { box-sizing: border-box; }
body { margin: 0; background: #fff; color: #000; font: 11px/14px "Liberation Sans", Arial, sans-serif; }
h1, h2, h3, ul, figure { margin: 0; padding: 0; }
h1, h2 { font: bold 11px/14px "Open Sans", "Noto Sans", sans-serif; }
button, input, select { font: inherit; color: inherit; border: 0; padding: 0; margin: 0; border-radius: 0; background: none; }
button { display: flex; align-items: center; justify-content: center; white-space: pre; }
select { appearance: none; }
svg { display: block; flex: none; }
text { stroke: none; fill: #181818; }
.sprite { position: absolute; width: 0; height: 0; }
.ico { width: 16px; height: 16px; }

.host { background: #c0c0c0; border-bottom: 2px solid #000; min-width: 1200px; }
.windows { display: flex; }
.visio { flex: 1; min-width: 0; border: 2px solid #d4d4d4; border-right: 2px solid #000; border-bottom: 2px solid #000; padding: 2px 4px 0 2px; background: #c8c8c8; box-shadow: inset 0 1px #fff; }
.behind { flex: 0 0 175px; display: flex; flex-direction: column; padding: 4px 4px 0 0; border-right: 2px solid #888; }

.titlebar { display: flex; align-items: center; gap: 3px; height: 18px; padding: 0 1px 0 2px; background: linear-gradient(90deg, #000080, #08249a 25%, #0a62bc 65%, #1080d0); color: #fff; }
.behind .titlebar { background: linear-gradient(90deg, #0c74c8, #1084d0); }
.titlebar h1 { flex: 1; font-size: 12px; }
.winbtns { display: flex; margin-left: auto; }
.winbtns button { width: 16px; height: 14px; background: #c8c8c8; border: 1px solid; border-color: #fff #303030 #303030 #fff; }
.winbtns .close { margin-left: 2px; }
.winbtns svg, .docbtns svg, .exhead svg, .spside svg { width: 9px; height: 9px; }

.chrome { background: linear-gradient(90deg, #c6c6c6, #efefef 33%, #f2f2f2); padding: 1px 0 0 3px; height: 78px; }
.menubar { display: flex; align-items: center; height: 24px; }
.menubar .ico { margin: 0 1px 0 3px; }
.menubar > button { padding: 0 7px; height: 20px; }
.menubar > button:nth-of-type(n+4) { padding: 0 8px 0 7px; }
.grip { width: 3px; height: 16px; margin-left: 3px; background: repeating-linear-gradient(#888 0 2px, transparent 2px 4px); }
.ask { display: flex; width: 148px; height: 18px; margin: 0 3px 0 auto; background: #fff; }
.ask input { flex: 1; min-width: 0; padding-left: 3px; }
.ask input::placeholder { color: #707070; opacity: 1; }
.ask button { width: 13px; background: #f0f0f0; }
.ask svg { width: 6px; height: 6px; }
.docbtns { display: flex; gap: 8px; margin-right: 3px; }
.bars { display: flex; gap: 5px; height: 26px; }
.band { display: flex; align-items: center; height: 25px; background: linear-gradient(#f6f6f6, #dcdcdc 50%, #c0c0c0); border-radius: 2px; padding-left: 1px; }
.band .grip, .extools .grip { margin: 0 1px; }
.band button, .extools button { width: 23px; height: 22px; }
.band button svg, .extools svg, .foldertools svg, .zoomtools svg { width: 16px; height: 16px; }
.band .on { background: #d0d0dc; border: 1px solid #101070; }
.band i, .extools i { width: 1px; height: 16px; margin: 0 2px 0 3px; background: #989898; box-shadow: 1px 0 #f8f8f8; }
.band .dd { width: 11px; background: linear-gradient(#000, #000) 50% 10px/5px 1px no-repeat, linear-gradient(#000, #000) 50% 11px/3px 1px no-repeat, linear-gradient(#000, #000) 50% 12px/1px 1px no-repeat; }
.band .off { opacity: .5; }
.band .end { width: 11px; height: 25px; margin-left: 2px; border-radius: 0 3px 3px 0; background: linear-gradient(#000, #000) 4px 16px/5px 1px no-repeat, linear-gradient(#fff, #fff) 4px 18px/5px 1px no-repeat, linear-gradient(#000, #000) 5px 19px/3px 2px no-repeat, linear-gradient(#a8a8a8, #6c6c6c); }
.band .word { width: auto; padding: 0 4px; color: #888; gap: 3px; }
.band.design { margin-left: auto; }
.band.design + .band { margin-right: 231px; }
.band select { height: 18px; padding-left: 3px; background: linear-gradient(#000, #000) right 5px top 8px/5px 1px no-repeat, linear-gradient(#000, #000) right 6px top 9px/3px 1px no-repeat, linear-gradient(#000, #000) right 7px top 10px/1px 1px no-repeat, linear-gradient(#e4e4e4, #e4e4e4) right 1px top 1px/12px 16px no-repeat, #fff; }
.band .zoom { width: 56px; }
.band .face { width: 121px; margin-right: 2px; }
.band .size { width: 73px; }
.band .fmt { font: bold 13px/16px "Liberation Serif", serif; }

.work { display: flex; height: 894px; }
.explorer { flex: 0 0 388px; min-width: 0; padding-left: 3px; display: flex; flex-direction: column; background: #c0c0c0; }
.exhead { display: flex; align-items: center; justify-content: space-between; height: 24px; padding: 0 6px 0 5px; background: linear-gradient(#d4d4d4, #c4c4c4); }
.extools { display: flex; align-items: center; height: 25px; padding-left: 3px; margin-right: 1px; background: linear-gradient(#f4f4f4, #d0d0d0); }
.excols { display: flex; flex: 1; min-height: 0; padding-top: 1px; background: #c8c8c8; }
.exmain { flex: 1; min-width: 0; display: flex; flex-direction: column; padding-right: 6px; border-right: 1px solid #707070; background: #c0c0c0; }
.exmain h3 { height: 20px; padding: 1px 0 0 7px; border: 1px solid #888; background: linear-gradient(#e8e8e8, #c8c8c8); font: 11px/16px "Liberation Sans", Arial, sans-serif; }
.exblank { flex: none; width: 15px; margin: 1px 3px 0 0; background: #fff; border-left: 1px solid #000; border-top: 1px solid #000; }
.treebox { position: relative; display: flex; height: 383px; margin: 1px 2px 0 4px; background: #fff; border-bottom: 2px solid #000; border-right: 1px solid #000; overflow: hidden; }
.tree { flex: 1; list-style: none; padding-top: 1px; }
.tree li { display: flex; align-items: center; gap: 5px; height: 16px; }
.tree svg { width: 16px; height: 16px; }
.tree span { padding: 0 2px; margin-left: -1px; }
.tree .sel { background: #c0c0c0; line-height: 16px; }
.tree li::before { content: ""; width: 9px; height: 9px; margin-right: 1px; }
.tree .plus::before, .tree .minus::before { border: 1px solid #808080; background: linear-gradient(#000, #000) 50% 50%/5px 1px no-repeat; }
.tree .plus::before { background: linear-gradient(#000, #000) 50% 50%/5px 1px no-repeat, linear-gradient(#000, #000) 50% 50%/1px 5px no-repeat; }
.l0 { padding-left: 63px; }
.l1 { padding-left: 83px; }
.l2 { padding-left: 104px; }
.callout { position: absolute; border: 3px solid #cc1c1c; }
.first { left: 87px; top: 62px; width: 139px; height: 38px; }
.second { left: 90px; top: 275px; width: 94px; height: 52px; }
.vscroll, .hscroll { display: flex; background: repeating-conic-gradient(#fff 0 25%, #c8c8c8 0 50%) 0 0/2px 2px; }
.vscroll { flex-direction: column; width: 16px; }
.vscroll button, .hscroll button { flex: none; width: 16px; height: 16px; }
.vscroll button, .hscroll button, .thumb, .arr { background: #c4c4c4; border: 1px solid; border-color: #f4f4f4 #202020 #202020 #f4f4f4; }
.vscroll svg, .hscroll svg, .arr svg { width: 7px; height: 7px; }
.vscroll button:last-child, .hscroll button:last-child { margin-top: auto; margin-left: auto; }
.treethumb { height: 53px; margin-top: 54px; }
.splitter { height: 9px; display: flex; justify-content: center; align-items: center; background: #a8a8a8; }
.splitter span { width: 36px; height: 2px; background: repeating-linear-gradient(90deg, #fff 0 2px, #707070 2px 4px); }
.foldertools { display: flex; justify-content: flex-end; height: 33px; border: 1px solid #909090; border-top: 0; background: linear-gradient(#fafafa, #bcbcbc); }
.foldertools button { width: 22px; }
.foldertools .on { background: #bcbcc8; }
.zoomtools { display: flex; align-items: center; height: 28px; padding: 2px 0 0 3px; gap: 6px; }
.zoomtools select { width: 58px; height: 20px; padding-left: 3px; border: 1px solid #404040; background: linear-gradient(#000, #000) right 4px top 7px/7px 1px no-repeat, linear-gradient(#000, #000) right 5px top 8px/5px 1px no-repeat, linear-gradient(#000, #000) right 6px top 9px/3px 1px no-repeat, linear-gradient(#c4c4c4, #c4c4c4) right top/15px 18px no-repeat, #fff; }
.zoomtools .on { width: 22px; height: 21px; margin-left: -4px; background: #dcdcdc; border: 1px solid; border-color: #808080 #fff #fff #808080; }
.zoomtools .pages { margin-left: 20px; }
.shapes { flex: 1; display: grid; grid-template-columns: repeat(6, 48px); gap: 2px; grid-auto-rows: 64px; margin: 0 4px 4px 5px; padding-top: 1px; background: #c4d6fc; border-top: 1px solid #000; border-left: 1px solid #000; }
.shapes figure { display: flex; flex-direction: column; align-items: center; gap: 4px; }
.shapes figure svg { width: 47px; height: 47px; border: 1px solid #000; border-radius: 6px; fill: none; stroke: #000; }
.tabs { display: flex; height: 20px; margin: 0 0 2px 5px; }
.tabs button { flex: none; height: 17px; padding: 0 4px; margin-right: 1px; border-right: 1px solid #000; border-bottom: 1px solid #000; border-left: 1px solid #fff; }
.tabs .cur { height: 20px; padding: 0 6px; margin-right: 0; border-right: 1px solid #000; }
.tabs .cut { flex: 1; min-width: 0; padding: 0; justify-content: flex-start; overflow: hidden; margin-right: 0; }
.tabs .arr { width: 16px; padding: 0; margin: 0; border: 1px solid; border-color: #fff #202020 #202020 #fff; }
.tabs .arr:last-child { margin-right: 2px; }

.editor { flex: 1; min-width: 0; display: grid; grid-template: 18px 1fr 17px / 17px 1fr 16px; margin-left: 2px; border-left: 1px solid #000; background: #c8c8c8; }
.corner { grid-area: 1 / 1; background: linear-gradient(#8088c0, #8088c0) 50% 0/1px 100% no-repeat, linear-gradient(#8088c0, #8088c0) 0 50%/100% 1px no-repeat, #fff; border: 1px solid #000; border-left: 0; border-top-width: 2px; }
.hruler { grid-area: 1 / 2; width: 100%; height: 18px; background: linear-gradient(#fff, #ccc); border-top: 2px solid #000; border-bottom: 1px solid #000; }
.vruler { grid-area: 2 / 1; width: 17px; height: 100%; background: linear-gradient(90deg, #fff, #ccc); border-right: 1px solid #000; }
.hruler, .vruler { overflow: hidden; font-size: 9px; stroke: #808080; shape-rendering: crispEdges; }
.canvas { grid-area: 2 / 2; position: relative; overflow: hidden; background: linear-gradient(#8e99af, #67738f); }
.drawing { position: absolute; inset: 0; width: 100%; height: 100%; }
.ink { stroke: #000; shape-rendering: crispEdges; }
.soft { stroke: #808080; fill: none; }
.thick { stroke-width: 3px; }
.shadow { fill: #4c566c; stroke: none; }
.frame { fill: none; stroke: #505850; }
.blot { fill: #fff; stroke: none; }
.t6 { font-size: 6px; }
.t7 { font-size: 7px; }
.t9 { font-size: 9px; }
.t10 { font-size: 10px; }
.mid { text-anchor: middle; }
.end, .feedtext { text-anchor: end; }
.vscroll.main { grid-area: 1 / 3 / 3 / 4; }
.main .thumb { height: 46%; margin-top: 218px; }
.hscroll { grid-area: 3 / 1 / 4 / 3; }
.hscroll .thumb { width: 40%; margin-left: 354px; }

.sizepos { position: absolute; left: 0; bottom: 0; width: 199px; display: flex; padding: 2px 2px 2px 1px; background: #d4d4d4; border: 1px solid #000; }
.spside { display: flex; flex-direction: column; align-items: center; width: 17px; gap: 3px; }
.spside h2 { flex: 1; writing-mode: vertical-rl; white-space: nowrap; }
.spside button { width: 16px; height: 18px; }
.spside .pin { border: 1px solid #101070; }
.spside .pin svg { width: 12px; height: 12px; }
.fields { flex: 1; display: grid; grid-template-columns: 78px 1fr; gap: 1px; background: #a8a8a8; border: 1px solid #a8a8a8; }
.fields label { height: 20px; padding: 3px 4px; background: linear-gradient(#f4f4f4, #dedede); }
.fields input { width: 100%; min-width: 0; padding: 0 4px; background: #fff; }

.vstatus { display: flex; align-items: center; gap: 5px; height: 23px; padding-left: 3px; background: linear-gradient(90deg, #c4c4c4, #f0f0f0 66%); }
.vstatus span { width: 150px; height: 16px; border: 1px solid #b0b0b0; text-align: center; }
.vstatus .sheetno { width: 100px; margin: 0 16px 0 auto; background: #f4f4f4; border-color: #888; }

.pane { height: 582px; margin-top: 59px; display: flex; justify-content: flex-end; background: #fff; border-top: 2px solid #000; border-bottom: 1px solid #c0c0c0; }
.pane .thumb { height: 16px; }
.pane2 { flex: 1; background: #fff; border-top: 1px solid #888; }

.hoststatus { display: flex; gap: 3px; height: 20px; padding: 0 1px 2px 2px; white-space: nowrap; }
.hoststatus span { border: 1px solid; border-color: #888 #f0f0f0 #f0f0f0 #888; padding: 1px 3px; overflow: hidden; }
.count { width: 137px; }
.server { flex: 1; }
.key { width: 26px; }
.key + .key { width: 32px; }
.sizegrip { width: 14px; height: 14px; margin-left: 6px; align-self: flex-end; }
```
FILE: script.js
```js
// Rulers, zone letters and repeated circuit symbols of the drawing sheet.
const NS = "http://www.w3.org/2000/svg";
const byId = (id) => document.getElementById(id);

function add(parent, name, attrs, text) {
  const el = document.createElementNS(NS, name);
  for (const key in attrs) el.setAttribute(key, attrs[key]);
  if (text !== undefined) el.textContent = text;
  parent.appendChild(el);
  return el;
}

// Ruler scale: 2.5 px per millimetre, one tick every 2 mm.
const PX = 2.5;
let d = "";
for (let mm = -34; mm <= 454; mm += 2) {
  const x = 498 + mm * PX;
  d += mm % 10 === 0 ? `M${x} 100v16` : `M${x} 110v6`;
  if (mm % 10 === 0) add(byId("hticks"), "text", { x: x + 2, y: 109 }, mm);
}
add(byId("hticks"), "path", { d });

d = "";
for (let mm = 320; mm >= -22; mm -= 2) {
  const y = 918 - mm * PX;
  d += mm % 10 === 0 ? `M396 ${y}h15` : `M405 ${y}h6`;
  if (mm % 10 === 0) {
    add(byId("vticks"), "text", { transform: `translate(405,${y + 10}) rotate(-90)`, "text-anchor": "middle" }, mm);
  }
}
add(byId("vticks"), "path", { d });

for (let i = 0; i < 8; i++) {
  const x = 564 + i * 131;
  add(byId("zones"), "text", { x, y: 184 }, i + 1);
  add(byId("zones"), "text", { x, y: 914 }, i + 1);
}
[..."ABCDEF"].forEach((letter, i) => {
  const y = 239 + i * 124 - (i === 5 ? 6 : 0);
  add(byId("zones"), "text", { x: 504, y }, letter);
  add(byId("zones"), "text", { x: 1541, y: i === 0 ? y + 3 : y }, letter);
});

const feeds = [
  ["-F1605", "+24ST", "+24ST"],
  ["-F1606", "+24S7-SPS", "+24S7-SPS"],
  ["-F1607", "+24B&R-SPS", "+24BR-SPS"],
  ["-F1608", "+24VIDEO", "+24VIDEO"],
];
feeds.forEach(([name, supply, strip], i) => {
  const x = 1048 + i * 120;
  const g = byId("feeds");
  add(g, "path", { d: `M${x} 288v50M${x} 828V728h30`, fill: "none" });
  add(g, "path", { d: `M${x + 30} 728h20m-4-3l4 3-4 3`, class: "soft" });
  add(g, "use", { href: "#breaker", x, y: 338 });
  add(g, "path", { d: `M${x} 368v140h30`, fill: "none" });
  add(g, "path", { d: `M${x - 10} 458h20v60h-20z`, fill: "none", "stroke-dasharray": "2 1" });
  add(g, "path", { d: `M${x + 30} 508h20m-4-3l4 3-4 3`, class: "soft" });
  [468, 488, 508].forEach((y, n) => {
    add(g, "use", { href: "#multi", x, y });
    add(g, "text", { x: x + 2, y: y - 2, class: "t6" }, n + 1);
  });
  for (const y of [508, 728]) add(g, "use", { href: "#mark", x: x + 30, y });
  for (const y of [288, 728]) add(g, "use", { href: "#mark", x, y });
  add(g, "text", { x: x - 8, y: 345, class: "t9 feedtext" }, name);
  add(g, "text", { x: x - 9, y: 368, class: "t6 feedtext" }, supply);
  add(g, "text", { x: x - 9, y: 374, class: "t6 feedtext" }, "6A");
  add(g, "text", { x: x - 13, y: 465, class: "t9 feedtext" }, strip);
});

for (let n = 1; n <= 25; n++) {
  const x = 968 + n * 20;
  add(byId("strip"), "use", { href: "#multi", x, y: 828 });
  add(byId("strip"), "text", { x: x + 2, y: 825, class: "t6" }, n);
}

const points = [
  [608, 208], [648, 238], [608, 408], [648, 408], [608, 458], [648, 458], [598, 428],
  [568, 428], [568, 448], [648, 528], [698, 528], [698, 288], [768, 288], [773, 288],
  [768, 293], [768, 338], [828, 338], [828, 488], [848, 568], [848, 738], [908, 768],
  [808, 288], [838, 288], [858, 288], [888, 288], [608, 828],
];
for (const y of [208, 218, 228, 238]) points.push([558, y], [1458, y]);
for (const [x, y] of points) add(byId("marks"), "use", { href: "#mark", x, y });
```
